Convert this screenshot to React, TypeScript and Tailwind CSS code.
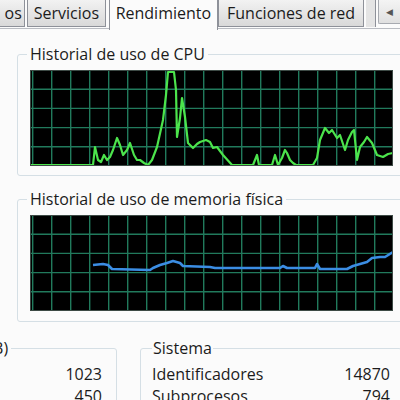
import React from 'react';

const cpu: [number, number][] = [
  [30, 165], [93, 165], [95, 147], [98, 160], [101, 162], [104, 155], [107, 160], [110, 157], [113, 150],
  [117, 138], [120, 145], [123, 155], [127, 150], [130, 143], [134, 155], [137, 160], [140, 160], [144, 163],
  [148, 165], [152, 160], [157, 147], [163, 120], [166, 95], [168, 72], [174, 72], [176, 90], [177, 137],
  [180, 118], [182, 98], [185, 117], [188, 143], [193, 148], [197, 144], [200, 142], [206, 140], [210, 142],
  [213, 148], [217, 147], [223, 155], [232, 165], [253, 165], [255, 160], [257, 155], [259, 165], [272, 165],
  [275, 155], [278, 165], [282, 158], [285, 150], [287, 153], [290, 160], [293, 163], [296, 165], [313, 165],
  [317, 158], [320, 140], [325, 128], [329, 133], [332, 130], [337, 138], [340, 135], [345, 150], [348, 140],
  [352, 132], [354, 130], [357, 160], [360, 147], [364, 142], [367, 137], [372, 143], [377, 155], [383, 157],
  [388, 154], [393, 153],
];

const mem: [number, number][] = [
  [93, 265], [103, 264], [108, 265], [112, 269], [150, 270], [153, 268], [160, 265], [167, 263], [173, 261],
  [180, 263], [183, 266], [210, 267], [215, 268], [280, 268], [283, 266], [287, 268], [315, 268], [317, 264],
  [320, 269], [347, 269], [353, 266], [360, 264], [367, 262], [372, 258], [380, 257], [385, 257], [393, 252],
];

function Graph({ points, ox, oy, color, width }: { points: [number, number][]; ox: number; oy: number; color: string; width: number }) {
  const w = 363;
  const h = 96;
  const cols = Array.from({ length: 19 }, (_, i) => 2.7 + i * 19);
  const rows = Array.from({ length: 6 }, (_, i) => i * 19.2);
  const d = points.map(([x, y]) => `${x - ox},${y - oy}`).join(' ');
  return (
    <svg width={w} height={h} className="block bg-black" viewBox={`0 0 ${w} ${h}`}>
      {cols.map(x => (
        <line key={'c' + x} x1={x} y1={0} x2={x} y2={h} stroke="#217a5c" strokeWidth={1.4} />
      ))}
      {rows.map(y => (
        <line key={'r' + y} x1={0} y1={y} x2={w} y2={y} stroke="#217a5c" strokeWidth={1.4} />
      ))}
      <polyline points={d} fill="none" stroke={color} strokeWidth={width} strokeLinejoin="round" />
      <rect x={0.5} y={0.5} width={w - 1} height={h - 1} fill="none" stroke="#3d4a45" />
    </svg>
  );
}

function Tab({ label, className }: { label: string; className: string }) {
  return (
    <div className={`flex items-center border border-t-0 border-[#8e9199] bg-gradient-to-b from-[#f2f2f2] to-[#d9d9d9] text-[#1b1b1b] ${className}`}>
      {label}
    </div>
  );
}

export default function App() {
  return (
    <div className="relative h-[400px] w-[400px] overflow-hidden bg-[#fbfbfb] font-['Open_Sans','Noto_Sans',sans-serif] text-[16px] text-[#1b1b1b]">
      {/* tabs */}
      <div className="flex h-[29px] items-start border-b border-[#b9bcc2]">
        <Tab label="os" className="h-[27px] w-[25px] border-l-0 justify-end pr-[2px]" />
        <Tab label="Servicios" className="ml-[2px] h-[27px] w-[80px] justify-center" />
        <div className="relative z-10 ml-[3px] flex h-[30px] w-[110px] items-start justify-center border-x border-[#8e9199] bg-[#fbfbfb] pt-[1px]">
          Rendimiento
        </div>
        <Tab label="Funciones de red" className="h-[27px] w-[148px] justify-center" />
        <div className="ml-[2px] h-[27px] w-[10px] border-r border-[#8e9199] bg-[#e4e4e4]" />
        <div className="ml-[2px] flex h-[24px] w-[22px] items-center justify-center rounded-bl-[2px] border border-t-0 border-r-0 border-[#a7aab0] bg-gradient-to-b from-[#f4f4f4] to-[#e0e0e0] text-[9px] text-[#555]">
          ◀
        </div>
      </div>

      {/* CPU */}
      <fieldset className="ml-[17px] mt-[15px] w-[395px] rounded-[3px] border border-[#d5dfe5] pb-[9px] pl-[12px]">
        <legend className="-ml-[3px] px-[3px] leading-[20px]">Historial de uso de CPU</legend>
        <div className="mt-[6px]">
          <Graph points={cpu} ox={30} oy={70} color="#4ce44c" width={2.2} />
        </div>
      </fieldset>

      {/* Memoria */}
      <fieldset className="ml-[17px] mt-[13px] w-[395px] rounded-[3px] border border-[#d5dfe5] pb-[10px] pl-[12px]">
        <legend className="-ml-[3px] px-[3px] leading-[20px]">Historial de uso de memoria física</legend>
        <div className="mt-[6px]">
          <Graph points={mem} ox={30} oy={215} color="#3b8de3" width={2.6} />
        </div>
      </fieldset>

      {/* bottom boxes */}
      <div className="mt-[16px] flex gap-[23px]">
        <fieldset className="-ml-[40px] w-[157px] shrink-0 rounded-[3px] border border-[#d5dfe5] pr-[14px]">
          <legend className="ml-[10px] px-[3px] leading-[20px]">(MB)</legend>
          <div className="mt-[5px] text-right leading-[22px]">
            <div>1023</div>
            <div>450</div>
          </div>
        </fieldset>
        <fieldset className="w-[262px] shrink-0 rounded-[3px] border border-[#d5dfe5] pl-[11px] pr-[11px]">
          <legend className="px-[1px] leading-[20px]">Sistema</legend>
          <div className="mt-[5px] leading-[22px]">
            <div className="flex justify-between"><span>Identificadores</span><span>14870</span></div>
            <div className="flex justify-between"><span>Subprocesos</span><span>794</span></div>
          </div>
        </fieldset>
      </div>
    </div>
  );
}
